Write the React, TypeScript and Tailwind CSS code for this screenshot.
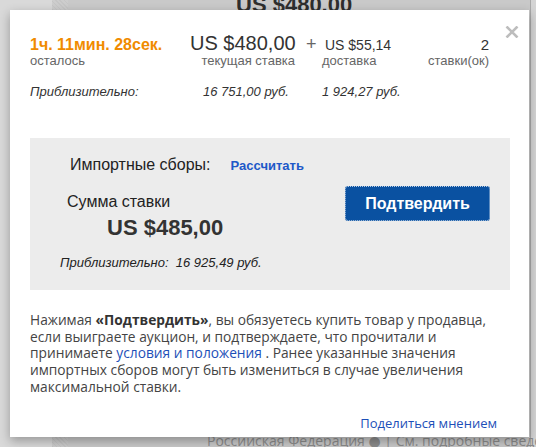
const sans = "font-['Liberation_Sans',Arial,sans-serif]";
const body = "font-['Open_Sans','DejaVu_Sans',Verdana,sans-serif]";

const CloseIcon = () => (
  <svg width="14" height="12" viewBox="0 0 14 12" className="block">
    <path d="M1.5 0.5 L12.5 11.5 M12.5 0.5 L1.5 11.5" stroke="#bdbdbd" strokeWidth="2.6" />
  </svg>
);

const BidSummary = () => (
  <div className={`grid grid-cols-[160px_105px_27px_100px_1fr] whitespace-nowrap ${sans}`}>
    {/* values */}
    <div className="self-baseline text-[16px] leading-none font-bold text-[#f08b00]">
      1ч. 11мин. 28сек.
    </div>
    <div className="self-baseline text-right text-[20px] leading-none text-[#333]">US $480,00</div>
    <div className="self-baseline pl-[11px] text-[18px] leading-none text-[#666]">+</div>
    <div className="self-baseline pl-[3px] text-[14px] leading-none text-[#333]">US $55,14</div>
    <div className="self-baseline text-right text-[15px] leading-none text-[#333]">2</div>

    {/* captions */}
    <div className="text-[13px] leading-[16px] text-[#666]">осталось</div>
    <div className="text-right text-[13px] leading-[16px] text-[#666]">текущая ставка</div>
    <div />
    <div className="text-[13px] leading-[16px] text-[#666]">доставка</div>
    <div className="text-right text-[13px] leading-[16px] text-[#666]">ставки(ок)</div>

    {/* converted */}
    <div className="mt-[15px] text-[13px] leading-[16px] italic text-[#333]">Приблизительно:</div>
    <div className="mt-[15px] pl-[13px] text-[13px] leading-[16px] italic text-[#333]">16 751,00 руб.</div>
    <div className="mt-[15px]" />
    <div className="mt-[15px] text-[13px] leading-[16px] italic text-[#333]">1 924,27 руб.</div>
    <div className="mt-[15px]" />
  </div>
);

const ConfirmBox = () => (
  <div className={`mt-[38px] mr-[19px] bg-[#ececec] pt-[17px] pr-[20px] pb-[19px] ${sans}`}>
    <div className="flex items-baseline gap-[20px] pl-[40px]">
      <span className="text-[16px] leading-[20px] text-[#222]">Импортные сборы:</span>
      <a className="text-[13px] leading-[20px] font-bold text-[#2058c8]">Рассчитать</a>
    </div>
    <div className="mt-[10px] flex items-start">
      <div className="pt-[6px] pl-[30px]">
        <div className="pl-[7px] text-[16px] leading-[20px] text-[#222]">Сумма ставки</div>
        <div className="mt-[3px] pl-[47px] text-[22px] leading-[26px] font-bold text-[#333]">US $485,00</div>
        <div className="mt-[14px] text-[13px] leading-[16px] italic text-[#222]">
          Приблизительно:&nbsp; 16 925,49 руб.
        </div>
      </div>
      <button className="ml-auto h-[35px] w-[145px] rounded-[3px] bg-[#0a51a1] outline-1 outline-dotted outline-white/70 -outline-offset-1 text-[16px] font-bold text-white">
        Подтвердить
      </button>
    </div>
  </div>
);

export default function App() {
  return (
    <div className="relative h-[447px] w-[536px] overflow-hidden bg-[#c9c9c9]">
      {/* page behind the overlay */}
      <div className="absolute inset-y-0 left-0 w-[52px] bg-[#d9d9d9]" />
      <div className="absolute inset-y-0 left-[52px] w-[16px] bg-[#cdcdcd] bg-[repeating-linear-gradient(45deg,#c6c6c6_0_1px,transparent_1px_3px)]" />
      <div className="absolute inset-y-0 right-0 w-[6px] border-l border-[#a9a9a9] bg-[#d4d4d4]" />
      <div className={`absolute top-[-8px] left-[236px] text-[22px] leading-[25px] font-bold text-[#2e2e2e] ${sans}`}>
        US $480,00
      </div>
      <div className={`absolute top-[430px] left-[207px] whitespace-nowrap text-[14px] text-[#8c8c8c] ${body}`}>
        Российская Федерация ● | См. подробные сведения
      </div>

      {/* dialog */}
      <div className="absolute top-[10px] left-[10px] w-[519px] h-[427px] bg-white pl-[20px] pt-[23px] shadow-[0_4px_10px_rgba(0,0,0,0.3)]">
        <button className="absolute top-[16px] right-[10px]">
          <CloseIcon />
        </button>
        <div className="pr-[40px]">
          <BidSummary />
        </div>
        <ConfirmBox />
        <p className={`mt-[22px] pr-[37px] text-[13.75px] leading-[16.7px] text-[#444] ${body}`}>
          Нажимая <b className="text-[#333]">«Подтвердить»</b>, вы обязуетесь купить товар у продавца, если
          выиграете аукцион, и подтверждаете, что прочитали и принимаете{" "}
          <a className="text-[#1d4fb8]">условия и положения</a> . Ранее указанные значения импортных сборов
          могут быть измениться в случае увеличения максимальной ставки.
        </p>
        <div className="mt-[14px] pr-[32px] text-right">
          <a className={`text-[13px] leading-[17px] text-[#1d4fb8] ${body}`}>Поделиться мнением</a>
        </div>
      </div>
    </div>
  );
}
